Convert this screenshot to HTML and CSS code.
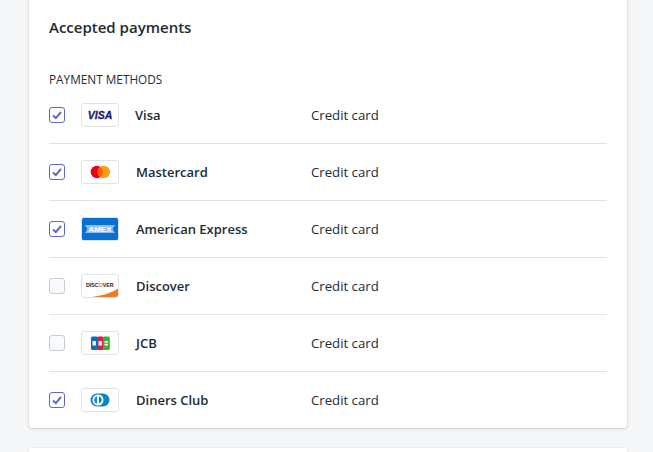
FILE: index.html
```html
<!DOCTYPE html>
<html lang="en">
<head>
    <meta charset="UTF-8">
    <title>Accepted payments</title>
    <link rel="stylesheet" href="styles.css">
</head>
<body>
    <div class="card">
        <h2>Accepted payments</h2>
        <h3>Payment methods</h3>

        <div class="row">
            <span class="check on"><svg viewBox="0 0 14 14"><path d="M3 7.500l2.800 2.600L11 4"/></svg></span>
            <span class="logo">
                <svg viewBox="0 0 36 22"><text x="18" y="15" class="visa-mark">VISA</text></svg>
            </span>
            <span class="name name-visa">Visa</span>
            <span class="type">Credit card</span>
        </div>

        <div class="row">
            <span class="check on"><svg viewBox="0 0 14 14"><path d="M3 7.500l2.800 2.600L11 4"/></svg></span>
            <span class="logo">
                <svg viewBox="0 0 36 22">
                    <circle cx="14.900" cy="11" r="6.200" fill="#eb001b"/>
                    <circle cx="21.800" cy="11" r="6.200" fill="#f79e1b"/>
                    <path d="M18.350 5.900A6.200 6.200 0 0 1 18.350 16.100A6.200 6.200 0 0 1 18.350 5.900z" fill="#ff5f00"/>
                </svg>
            </span>
            <span class="name">Mastercard</span>
            <span class="type">Credit card</span>
        </div>

        <div class="row">
            <span class="check on"><svg viewBox="0 0 14 14"><path d="M3 7.500l2.800 2.600L11 4"/></svg></span>
            <span class="logo logo-amex">
                <svg viewBox="0 0 36 22">
                    <rect width="36" height="22" rx="1.500" fill="#0a70d0"/>
                    <path d="M3 7h30l-2.500 4 2.500 4H3l2.500-4z" fill="#8fbdea"/>
                    <text x="18" y="14.400" class="amex-mark" textLength="23" lengthAdjust="spacingAndGlyphs">AMEX</text>
                </svg>
            </span>
            <span class="name">American Express</span>
            <span class="type">Credit card</span>
        </div>

        <div class="row">
            <span class="check"></span>
            <span class="logo">
                <svg viewBox="0 0 36 22">
                    <path d="M36 13.500V20a2 2 0 0 1-2 2H10c12-1.500 20-4.500 26-8.500z" fill="#ee7a23"/>
                    <text x="4" y="11.500" class="discover-mark">DISC<tspan fill="#ee7a23">O</tspan>VER</text>
                </svg>
            </span>
            <span class="name">Discover</span>
            <span class="type">Credit card</span>
        </div>

        <div class="row">
            <span class="check"></span>
            <span class="logo">
                <svg viewBox="0 0 36 22">
                    <rect x="9" y="4.500" width="6.800" height="13.500" rx="1.500" fill="#0b6fb8"/>
                    <rect x="15" y="4.500" width="6.800" height="13.500" rx="1.500" fill="#dc1f45"/>
                    <rect x="21" y="4.500" width="6.800" height="13.500" rx="1.500" fill="#41ab3e"/>
                    <path d="M10.500 9h3.500v4.500h-3.500zM16.500 9h3.500v4.500h-3.500zM22.500 9h3.500v1.800h-3.500zM22.500 11.700h3.500v1.800h-3.500z" fill="#fff" opacity=".9"/>
                </svg>
            </span>
            <span class="name">JCB</span>
            <span class="type">Credit card</span>
        </div>

        <div class="row">
            <span class="check on"><svg viewBox="0 0 14 14"><path d="M3 7.500l2.800 2.600L11 4"/></svg></span>
            <span class="logo">
                <svg viewBox="0 0 36 22">
                    <path d="M15 4.500h6a6.500 6.500 0 0 1 0 13h-6a6.500 6.500 0 0 1 0-13z" fill="#0a85c7"/>
                    <circle cx="16" cy="11" r="5.500" fill="#fff"/>
                    <path d="M15 7.200v7.600a4 4 0 0 1 0-7.600zM17 7.200a4 4 0 0 1 0 7.600z" fill="#0a85c7"/>
                </svg>
            </span>
            <span class="name">Diners Club</span>
            <span class="type">Credit card</span>
        </div>
    </div>

    <div class="card card-next"></div>
</body>
</html>
```

FILE: styles.css
```css
html, body {
    height: 100%;
}
body {
    margin: 0;
    padding: 0 26px 0 29px;
    overflow: hidden;
    background: #f4f6f8;
    color: #212b36;
    font-family: 'Open Sans', 'Noto Sans', sans-serif;
    font-size: 13px;
}
.card {
    margin-top: -20px;
    padding: 36px 20px 0;
    height: 448px;
    box-sizing: border-box;
    background: #fff;
    border-radius: 3px;
    box-shadow: 0 0 0 1px rgba(63, 63, 68, 0.05), 0 1px 3px 0 rgba(63, 63, 68, 0.15);
}
.card-next {
    margin-top: 20px;
    padding: 0;
    height: 4px;
    border-radius: 3px 3px 0 0;
    box-shadow: 0 0 0 1px rgba(63, 63, 68, 0.05);
}
h2 {
    margin: 0;
    height: 24px;
    line-height: 23px;
    font-size: 15px;
    font-weight: 600;
}
h3 {
    margin: 32px 0 0;
    height: 16px;
    line-height: 15px;
    font-size: 11.8px;
    font-weight: 400;
    text-transform: uppercase;
}
.row {
    display: flex;
    align-items: center;
    height: 57px;
    box-sizing: border-box;
    border-bottom: 1px solid #dfe3e8;
}
.row:first-of-type {
    height: 56px;
    padding-bottom: 1px;
}
.row:last-child {
    height: 56px;
    border-bottom: none;
}
.check {
    width: 16px;
    height: 16px;
    margin-right: 16px;
    box-sizing: border-box;
    border: 1px solid #c4cdd5;
    border-radius: 3px;
    background: #f9fafb;
}
.check svg {
    display: block;
    width: 14px;
    height: 14px;
}
.check path {
    fill: none;
    stroke: #5c6ac4;
    stroke-width: 2;
}
.check.on {
    border-color: #5c6ac4;
    background: #fff;
}
.logo {
    width: 38px;
    height: 24px;
    margin-right: 17px;
    box-sizing: border-box;
    border: 1px solid #dfe3e8;
    border-radius: 3px;
    background: #fff;
}
.logo svg {
    display: block;
    width: 100%;
    height: 100%;
}
.logo-amex {
    border-color: #d5e5f6;
}
.name {
    width: 175px;
    font-weight: 600;
}
.name-visa {
    margin-left: -1px;
    width: 176px;
}
.type {
    font-size: 13.2px;
}
.visa-mark {
    font: italic 700 10.5px 'Liberation Sans', sans-serif;
    fill: #1a1f71;
    stroke: #1a1f71;
    stroke-width: 0.3;
    text-anchor: middle;
}
.amex-mark {
    font: 700 8px 'Liberation Sans', sans-serif;
    fill: #fff;
    text-anchor: middle;
}
.discover-mark {
    font: 700 5.300px 'Liberation Sans', sans-serif;
    fill: #231f20;
}
```
